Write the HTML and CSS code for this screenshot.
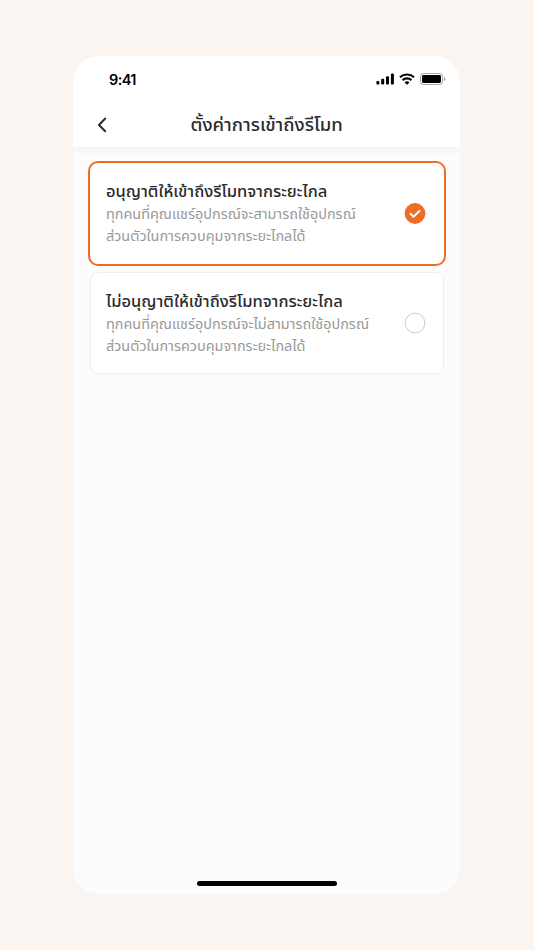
FILE: index.html
```html
<!DOCTYPE html>
<html lang="th">

<head>
    <meta charset="UTF-8">
    <meta name="viewport" content="width=device-width, initial-scale=1.0">
    <title>ตั้งค่าการเข้าถึงรีโมท</title>
    <link rel="stylesheet" href="styles.css">
</head>

<body>
    <div class="phone">
        <header class="header">
            <div class="status-bar">
                <span class="time">9:41</span>
                <div class="status-icons">
                    <svg width="18" height="12" viewBox="0 0 18 12">
                        <rect x="0.4" y="8" width="3" height="3.6" rx="1" />
                        <rect x="5.2" y="5.8" width="3" height="5.8" rx="1" />
                        <rect x="10" y="3.2" width="3" height="8.4" rx="1" />
                        <rect x="14.9" y="0.6" width="3" height="11" rx="1" />
                    </svg>
                    <svg width="16" height="12" viewBox="0 0 16 12" fill="none" stroke="#000" stroke-width="2.2">
                        <path d="M1 4.3a10.2 10.2 0 0 1 14 0" />
                        <path d="M3.6 7.1a6.4 6.4 0 0 1 8.8 0" />
                        <path d="M8 11.8L5.6 9.4a3.6 3.6 0 0 1 4.8 0z" fill="#000" stroke="none" />
                    </svg>
                    <svg width="26" height="12" viewBox="0 0 26 12">
                        <rect x="0.5" y="0.5" width="22" height="11" rx="3" fill="none" stroke="#000" stroke-opacity="0.35" />
                        <rect x="2" y="2" width="19" height="8" rx="1.4" />
                        <path d="M24 4v4c.8-.3 1.3-1.1 1.3-2s-.5-1.7-1.3-2z" fill-opacity="0.4" />
                    </svg>
                </div>
            </div>
            <div class="title-bar">
                <svg class="back" width="10" height="16" viewBox="0 0 10 16">
                    <path d="M8.2 1.5L2 8l6.2 6.2" />
                </svg>
                <h1>ตั้งค่าการเข้าถึงรีโมท</h1>
            </div>
        </header>

        <main class="options">
            <div class="option selected">
                <div class="option-text">
                    <h2>อนุญาติให้เข้าถึงรีโมทจากระยะไกล</h2>
                    <p>ทุกคนที่คุณแชร์อุปกรณ์จะสามารถใช้อุปกรณ์<br>ส่วนตัวในการควบคุมจากระยะไกลได้</p>
                </div>
                <svg class="radio" width="22" height="22" viewBox="0 0 22 22">
                    <circle cx="11" cy="10.5" r="10.4" />
                    <path d="M6.5 10.8l3 3 6-5.9" />
                </svg>
            </div>
            <div class="option">
                <div class="option-text">
                    <h2>ไม่อนุญาติให้เข้าถึงรีโมทจากระยะไกล</h2>
                    <p>ทุกคนที่คุณแชร์อุปกรณ์จะไม่สามารถใช้อุปกรณ์<br>ส่วนตัวในการควบคุมจากระยะไกลได้</p>
                </div>
                <svg class="radio" width="22" height="22" viewBox="0 0 22 22">
                    <circle cx="11" cy="11" r="9.9" />
                </svg>
            </div>
        </main>

        <div class="home-bar"></div>
    </div>
</body>

</html>
```
FILE: styles.css
```css
* {
    box-sizing: border-box;
}

body {
    font-family: "Noto Sans Thai", "Noto Sans", sans-serif;
    margin: 0;
    padding: 56px 0 0 73px;
    height: 950px;
    background-color: #faf5f1;
    color: #2b2b2b;
    overflow: hidden;
}

.phone {
    width: 387.4px;
    height: 838px;
    display: flex;
    flex-direction: column;
    background-color: #fcfcfc;
    border-radius: 26px;
    overflow: hidden;
}

.header {
    height: 91px;
    background-color: #fff;
    box-shadow: 0 2px 10px rgba(0, 0, 0, 0.06);
}

.status-bar {
    height: 46px;
    display: flex;
    justify-content: space-between;
    align-items: center;
    padding: 0 14.4px 0 36px;
}

.time {
    font-family: Inter, sans-serif;
    font-size: 14.5px;
    font-weight: 600;
    letter-spacing: -0.6px;
    color: #000;
}

.status-icons {
    display: flex;
    align-items: center;
    gap: 5px;
}

.title-bar {
    height: 45px;
    display: flex;
    align-items: center;
    padding: 0 24px;
}

.back {
    fill: none;
    stroke: #2b2b2b;
    stroke-width: 2;
    stroke-linecap: round;
    stroke-linejoin: round;
}

h1 {
    flex: 1;
    margin: 1px 10px 0 0;
    font-size: 18.5px;
    font-weight: 500;
    line-height: 28px;
    text-align: center;
    white-space: nowrap;
}

.options {
    flex: 1;
    padding: 14px 14.4px 14px 15px;
}

.option {
    height: 102px;
    margin: 6px 2px 0;
    display: flex;
    justify-content: space-between;
    align-items: center;
    padding: 0 17px 0 15px;
    background-color: #fff;
    border: 1px solid #eee;
    border-radius: 8px;
}

.option.selected {
    height: 105px;
    margin: 0;
    border: 2px solid #ed6d25;
    border-radius: 10px;
    padding: 0 18px 0 16px;
}

.option-text {
    padding-top: 1px;
}

h2 {
    margin: 0;
    font-size: 16.5px;
    font-weight: 500;
    line-height: 25px;
    white-space: nowrap;
}

p {
    margin: 1px 0 0;
    font-size: 14.45px;
    line-height: 21.7px;
    color: #999;
    white-space: nowrap;
}

.radio {
    flex: none;
    fill: #fff;
    stroke: #ccc;
}

.selected .radio circle {
    fill: #ed6d25;
    stroke: none;
}

.selected .radio path {
    fill: none;
    stroke: #fff;
    stroke-width: 2;
    stroke-linecap: round;
    stroke-linejoin: round;
}

.home-bar {
    width: 140px;
    height: 5px;
    margin: 0 auto 8px;
    background-color: #000;
    border-radius: 3px;
}
```
